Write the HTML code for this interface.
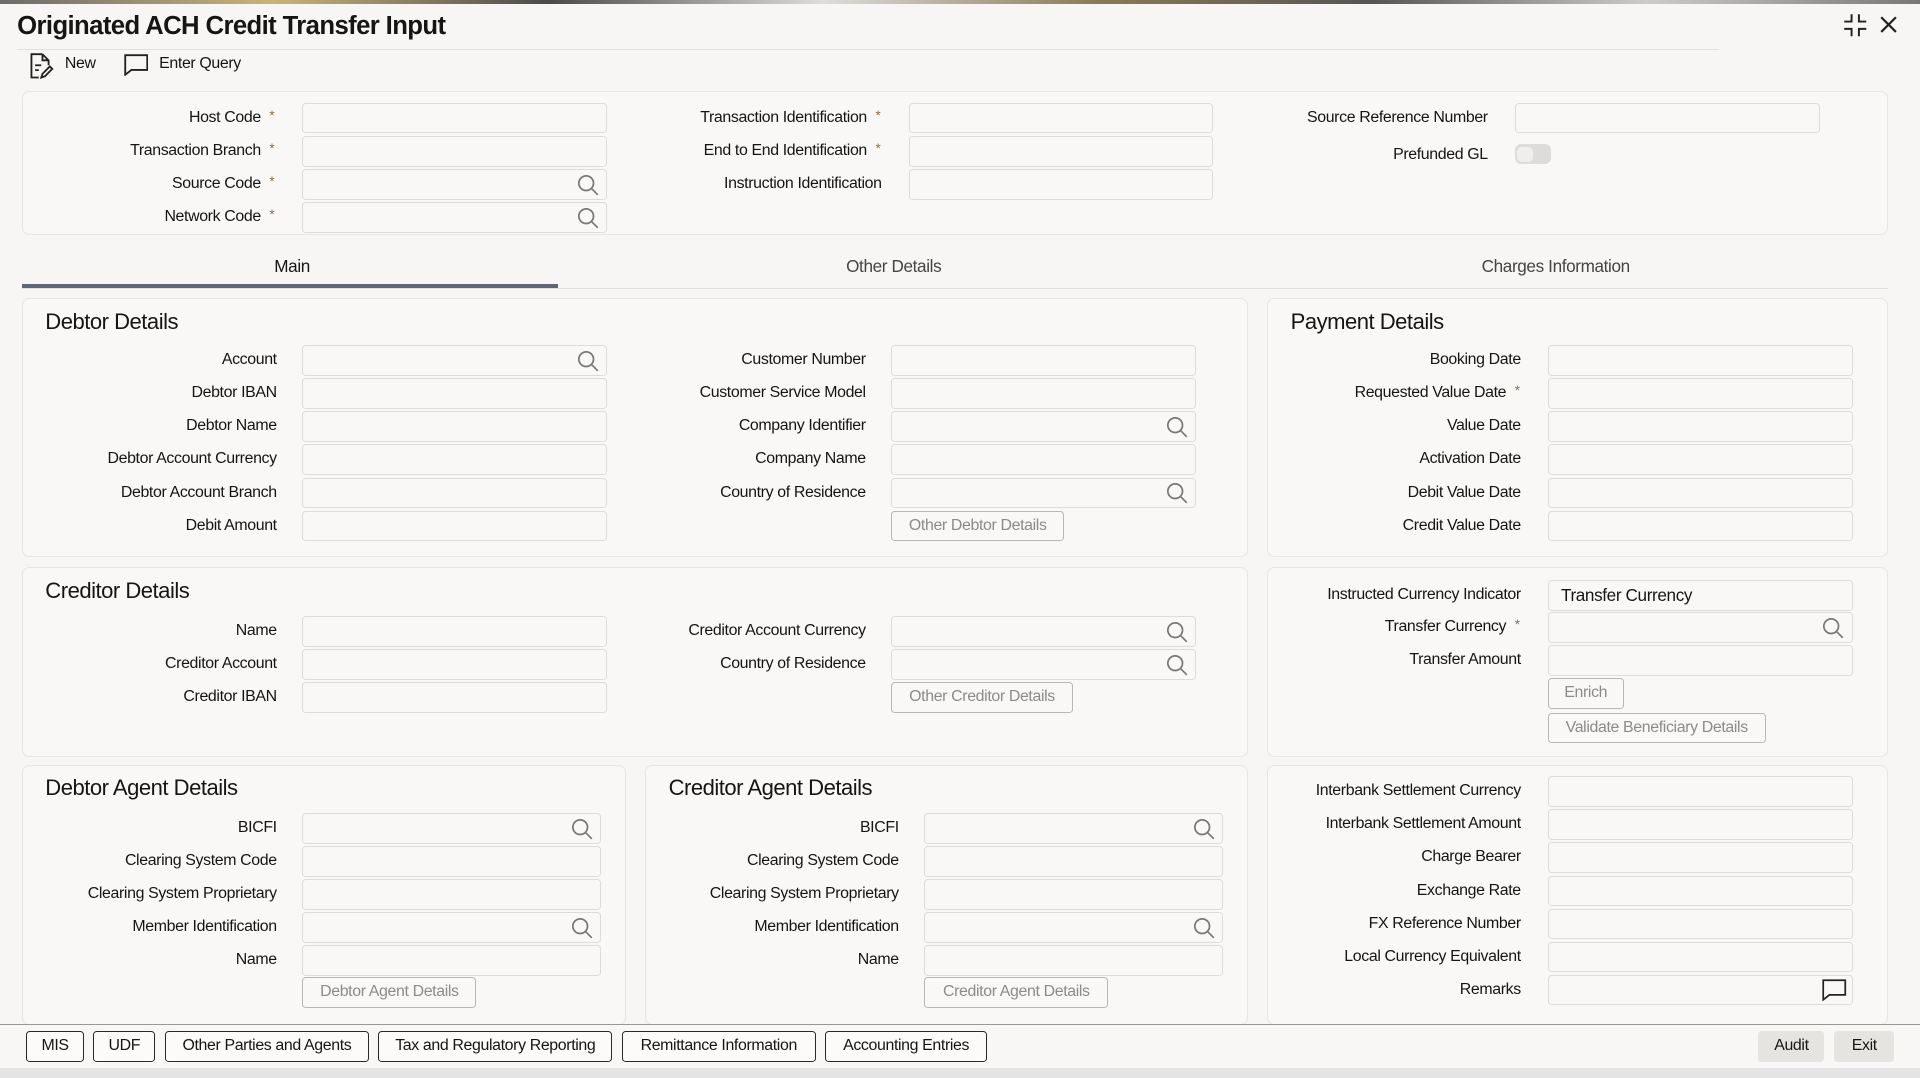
<!DOCTYPE html>
<html><head><meta charset="utf-8">
<style>
html,body{margin:0;padding:0;width:1920px;height:1078px;overflow:hidden;background:#fbfafa;}
#w{position:absolute;left:0;top:0;width:1568px;height:880px;zoom:1.22449;font-family:"Liberation Sans Narrow","Liberation Sans",sans-serif;color:#161513;font-size:13px;letter-spacing:-0.3px;background:#f7f6f5;}
.a{position:absolute}
.p{position:absolute;background:#f9f8f7;border:1px solid #e8e6e3;border-radius:6px;box-sizing:border-box}
.l{position:absolute;width:260px;text-align:right;line-height:25px;height:25px;white-space:nowrap}
.i{position:absolute;height:25px;background:#f9f8f7;border:1px solid #dedcda;border-radius:3px;box-sizing:border-box}
.s{position:absolute;right:6px;top:3px;width:18px;height:18px}
.st{color:#8a6e4b;font-size:11px;position:absolute;top:-5px}
.h{position:absolute;font-size:18px;line-height:22px;letter-spacing:-0.4px}
.b{position:absolute;border:1px solid #b9b7b4;border-radius:3px;height:25px;box-sizing:border-box;line-height:23px;text-align:center;color:#8d8b88;background:#f9f8f7}
.bb{position:absolute;top:842px;height:25px;border:1px solid #2a2927;border-radius:3px;box-sizing:border-box;line-height:23px;text-align:center;background:#fcfbfa}
</style></head><body><div id="w">
<div class="a" style="left:0;top:0;width:1568px;height:3px;background:linear-gradient(90deg,#6b6b6b,#c9b47a,#4a4a4a,#ddd,#8a7a55,#555,#ccc,#777)"></div>
<div class="a" style="left:14px;top:7px;font-size:21px;font-weight:bold;line-height:28px;letter-spacing:-0.5px">Originated ACH Credit Transfer Input</div>
<svg class="a" style="left:1505px;top:11px" width="20" height="20" viewBox="0 0 20 20" fill="none" stroke="#222" stroke-width="1.6"><path d="M7 1v6H1M13 1v6h6M7 19v-6H1M13 19v-6h6"/></svg>
<svg class="a" style="left:1535px;top:13px" width="14" height="14" viewBox="0 0 14 14" stroke="#222" stroke-width="1.8"><path d="M1 1l12 12M13 1L1 13"/></svg>
<div class="a" style="left:14px;top:40px;width:1390px;height:1px;background:#e2e0dd"></div>
<svg class="a" style="left:24px;top:43px" width="20" height="22" viewBox="0 0 20 22" fill="none" stroke="#222" stroke-width="1.5"><path d="M11 1H2v19h6M11 1l5 5v4M11 1v5h5M5 10h5M5 14h3M10 20l1-3 6-6 2 2-6 6z"/></svg>
<div class="a" style="left:53px;top:45px">New</div>
<svg class="a" style="left:101px;top:44px" width="20" height="18" viewBox="0 0 20 18" fill="none" stroke="#222" stroke-width="1.5"><path d="M1 1h18v12H6l-5 4z"/></svg>
<div class="a" style="left:130px;top:45px">Enter Query</div>

<div class="p" style="left:18px;top:74px;width:1524px;height:118px"></div>
<div class="l" style="left:-47px;top:84px">Host Code</div><span class="st" style="left:220px;top:88px">*</span><div class="i" style="left:247px;top:84px;width:249px"></div>
<div class="l" style="left:-47px;top:111px">Transaction Branch</div><span class="st" style="left:220px;top:115px">*</span><div class="i" style="left:247px;top:111px;width:249px"></div>
<div class="l" style="left:-47px;top:138px">Source Code</div><span class="st" style="left:220px;top:142px">*</span><div class="i" style="left:247px;top:138px;width:249px"><svg class="s" viewBox="0 0 18 18" fill="none" stroke="#777" stroke-width="1.4"><circle cx="7.5" cy="7.5" r="6"/><path d="M12 12l5 5"/></svg></div>
<div class="l" style="left:-47px;top:165px">Network Code</div><span class="st" style="left:220px;top:169px">*</span><div class="i" style="left:247px;top:165px;width:249px"><svg class="s" viewBox="0 0 18 18" fill="none" stroke="#777" stroke-width="1.4"><circle cx="7.5" cy="7.5" r="6"/><path d="M12 12l5 5"/></svg></div>
<div class="l" style="left:448px;top:84px">Transaction Identification</div><span class="st" style="left:715px;top:88px">*</span><div class="i" style="left:742px;top:84px;width:249px"></div>
<div class="l" style="left:448px;top:111px">End to End Identification</div><span class="st" style="left:715px;top:115px">*</span><div class="i" style="left:742px;top:111px;width:249px"></div>
<div class="l" style="left:460px;top:138px">Instruction Identification</div><div class="i" style="left:742px;top:138px;width:249px"></div>
<div class="l" style="left:955px;top:84px">Source Reference Number</div><div class="i" style="left:1237px;top:84px;width:249px"></div>
<div class="l" style="left:955px;top:114px">Prefunded GL</div>
<div class="a" style="left:1237px;top:118px;width:30px;height:16px;border-radius:5px;background:#dedcda"><div class="a" style="left:2px;top:2px;width:13px;height:12px;border-radius:4px;background:#efeeec"></div></div>

<div class="a" style="left:224px;top:209px;font-size:14px">Main</div>
<div class="a" style="left:691px;top:209px;font-size:14px;color:#444">Other Details</div>
<div class="a" style="left:1210px;top:209px;font-size:14px;color:#444">Charges Information</div>
<div class="a" style="left:18px;top:235px;width:1524px;height:1px;background:#e2e0dd"></div>
<div class="a" style="left:18px;top:232px;width:438px;height:3px;background:#5f6577"></div>

<div class="p" style="left:18px;top:243px;width:1001px;height:212px"></div>
<div class="h" style="left:37px;top:252px">Debtor Details</div>
<div class="l" style="left:-34px;top:282px">Account</div><div class="i" style="left:247px;top:282px;width:249px"><svg class="s" viewBox="0 0 18 18" fill="none" stroke="#777" stroke-width="1.4"><circle cx="7.5" cy="7.5" r="6"/><path d="M12 12l5 5"/></svg></div>
<div class="l" style="left:-34px;top:309px">Debtor IBAN</div><div class="i" style="left:247px;top:309px;width:249px"></div>
<div class="l" style="left:-34px;top:336px">Debtor Name</div><div class="i" style="left:247px;top:336px;width:249px"></div>
<div class="l" style="left:-34px;top:363px">Debtor Account Currency</div><div class="i" style="left:247px;top:363px;width:249px"></div>
<div class="l" style="left:-34px;top:390px">Debtor Account Branch</div><div class="i" style="left:247px;top:390px;width:249px"></div>
<div class="l" style="left:-34px;top:417px">Debit Amount</div><div class="i" style="left:247px;top:417px;width:249px"></div>
<div class="l" style="left:447px;top:282px">Customer Number</div><div class="i" style="left:728px;top:282px;width:249px"></div>
<div class="l" style="left:447px;top:309px">Customer Service Model</div><div class="i" style="left:728px;top:309px;width:249px"></div>
<div class="l" style="left:447px;top:336px">Company Identifier</div><div class="i" style="left:728px;top:336px;width:249px"><svg class="s" viewBox="0 0 18 18" fill="none" stroke="#777" stroke-width="1.4"><circle cx="7.5" cy="7.5" r="6"/><path d="M12 12l5 5"/></svg></div>
<div class="l" style="left:447px;top:363px">Company Name</div><div class="i" style="left:728px;top:363px;width:249px"></div>
<div class="l" style="left:447px;top:390px">Country of Residence</div><div class="i" style="left:728px;top:390px;width:249px"><svg class="s" viewBox="0 0 18 18" fill="none" stroke="#777" stroke-width="1.4"><circle cx="7.5" cy="7.5" r="6"/><path d="M12 12l5 5"/></svg></div>
<div class="b" style="left:728px;top:417px;width:141px">Other Debtor Details</div>

<div class="p" style="left:1035px;top:243px;width:507px;height:212px"></div>
<div class="h" style="left:1054px;top:252px">Payment Details</div>
<div class="l" style="left:982px;top:282px">Booking Date</div><div class="i" style="left:1264px;top:282px;width:249px"></div>
<div class="l" style="left:970px;top:309px">Requested Value Date</div><span class="st" style="left:1237px;top:313px">*</span><div class="i" style="left:1264px;top:309px;width:249px"></div>
<div class="l" style="left:982px;top:336px">Value Date</div><div class="i" style="left:1264px;top:336px;width:249px"></div>
<div class="l" style="left:982px;top:363px">Activation Date</div><div class="i" style="left:1264px;top:363px;width:249px"></div>
<div class="l" style="left:982px;top:390px">Debit Value Date</div><div class="i" style="left:1264px;top:390px;width:249px"></div>
<div class="l" style="left:982px;top:417px">Credit Value Date</div><div class="i" style="left:1264px;top:417px;width:249px"></div>

<div class="p" style="left:18px;top:463px;width:1001px;height:155px"></div>
<div class="h" style="left:37px;top:472px">Creditor Details</div>
<div class="l" style="left:-34px;top:503px">Name</div><div class="i" style="left:247px;top:503px;width:249px"></div>
<div class="l" style="left:-34px;top:530px">Creditor Account</div><div class="i" style="left:247px;top:530px;width:249px"></div>
<div class="l" style="left:-34px;top:557px">Creditor IBAN</div><div class="i" style="left:247px;top:557px;width:249px"></div>
<div class="l" style="left:447px;top:503px">Creditor Account Currency</div><div class="i" style="left:728px;top:503px;width:249px"><svg class="s" viewBox="0 0 18 18" fill="none" stroke="#777" stroke-width="1.4"><circle cx="7.5" cy="7.5" r="6"/><path d="M12 12l5 5"/></svg></div>
<div class="l" style="left:447px;top:530px">Country of Residence</div><div class="i" style="left:728px;top:530px;width:249px"><svg class="s" viewBox="0 0 18 18" fill="none" stroke="#777" stroke-width="1.4"><circle cx="7.5" cy="7.5" r="6"/><path d="M12 12l5 5"/></svg></div>
<div class="b" style="left:728px;top:557px;width:148px">Other Creditor Details</div>

<div class="p" style="left:1035px;top:463px;width:507px;height:155px"></div>
<div class="l" style="left:982px;top:474px">Instructed Currency Indicator</div><div class="i" style="left:1264px;top:474px;width:249px;padding-left:10px;font-size:14px;line-height:23px">Transfer Currency</div>
<div class="l" style="left:970px;top:500px">Transfer Currency</div><span class="st" style="left:1237px;top:504px">*</span><div class="i" style="left:1264px;top:500px;width:249px"><svg class="s" viewBox="0 0 18 18" fill="none" stroke="#777" stroke-width="1.4"><circle cx="7.5" cy="7.5" r="6"/><path d="M12 12l5 5"/></svg></div>
<div class="l" style="left:982px;top:527px">Transfer Amount</div><div class="i" style="left:1264px;top:527px;width:249px"></div>
<div class="b" style="left:1264px;top:554px;width:62px">Enrich</div>
<div class="b" style="left:1264px;top:582px;width:178px">Validate Beneficiary Details</div>

<div class="p" style="left:18px;top:625px;width:493px;height:212px"></div>
<div class="h" style="left:37px;top:633px">Debtor Agent Details</div>
<div class="l" style="left:-34px;top:664px">BICFI</div><div class="i" style="left:247px;top:664px;width:244px"><svg class="s" viewBox="0 0 18 18" fill="none" stroke="#777" stroke-width="1.4"><circle cx="7.5" cy="7.5" r="6"/><path d="M12 12l5 5"/></svg></div>
<div class="l" style="left:-34px;top:691px">Clearing System Code</div><div class="i" style="left:247px;top:691px;width:244px"></div>
<div class="l" style="left:-34px;top:718px">Clearing System Proprietary</div><div class="i" style="left:247px;top:718px;width:244px"></div>
<div class="l" style="left:-34px;top:745px">Member Identification</div><div class="i" style="left:247px;top:745px;width:244px"><svg class="s" viewBox="0 0 18 18" fill="none" stroke="#777" stroke-width="1.4"><circle cx="7.5" cy="7.5" r="6"/><path d="M12 12l5 5"/></svg></div>
<div class="l" style="left:-34px;top:772px">Name</div><div class="i" style="left:247px;top:772px;width:244px"></div>
<div class="b" style="left:247px;top:798px;width:142px">Debtor Agent Details</div>

<div class="p" style="left:527px;top:625px;width:492px;height:212px"></div>
<div class="h" style="left:546px;top:633px">Creditor Agent Details</div>
<div class="l" style="left:474px;top:664px">BICFI</div><div class="i" style="left:755px;top:664px;width:244px"><svg class="s" viewBox="0 0 18 18" fill="none" stroke="#777" stroke-width="1.4"><circle cx="7.5" cy="7.5" r="6"/><path d="M12 12l5 5"/></svg></div>
<div class="l" style="left:474px;top:691px">Clearing System Code</div><div class="i" style="left:755px;top:691px;width:244px"></div>
<div class="l" style="left:474px;top:718px">Clearing System Proprietary</div><div class="i" style="left:755px;top:718px;width:244px"></div>
<div class="l" style="left:474px;top:745px">Member Identification</div><div class="i" style="left:755px;top:745px;width:244px"><svg class="s" viewBox="0 0 18 18" fill="none" stroke="#777" stroke-width="1.4"><circle cx="7.5" cy="7.5" r="6"/><path d="M12 12l5 5"/></svg></div>
<div class="l" style="left:474px;top:772px">Name</div><div class="i" style="left:755px;top:772px;width:244px"></div>
<div class="b" style="left:755px;top:798px;width:150px">Creditor Agent Details</div>

<div class="p" style="left:1035px;top:625px;width:507px;height:212px"></div>
<div class="l" style="left:982px;top:634px">Interbank Settlement Currency</div><div class="i" style="left:1264px;top:634px;width:249px"></div>
<div class="l" style="left:982px;top:661px">Interbank Settlement Amount</div><div class="i" style="left:1264px;top:661px;width:249px"></div>
<div class="l" style="left:982px;top:688px">Charge Bearer</div><div class="i" style="left:1264px;top:688px;width:249px"></div>
<div class="l" style="left:982px;top:715px">Exchange Rate</div><div class="i" style="left:1264px;top:715px;width:249px"></div>
<div class="l" style="left:982px;top:742px">FX Reference Number</div><div class="i" style="left:1264px;top:742px;width:249px"></div>
<div class="l" style="left:982px;top:769px">Local Currency Equivalent</div><div class="i" style="left:1264px;top:769px;width:249px"></div>
<div class="l" style="left:982px;top:796px">Remarks</div><div class="i" style="left:1264px;top:796px;width:249px"><svg class="a" style="right:4px;top:3px" width="20" height="18" viewBox="0 0 20 18" fill="none" stroke="#222" stroke-width="1.4"><path d="M1 1h18v12H6l-5 4z"/></svg></div>

<div class="a" style="left:0;top:836px;width:1568px;height:1px;background:#9a9896"></div>
<div class="a" style="left:0;top:837px;width:1568px;height:35px;background:#f8f7f6"></div>
<div class="bb" style="left:21px;width:48px">MIS</div>
<div class="bb" style="left:76px;width:51px">UDF</div>
<div class="bb" style="left:135px;width:166px">Other Parties and Agents</div>
<div class="bb" style="left:309px;width:191px">Tax and Regulatory Reporting</div>
<div class="bb" style="left:508px;width:158px">Remittance Information</div>
<div class="bb" style="left:674px;width:132px">Accounting Entries</div>
<div class="a" style="left:1436px;top:842px;width:54px;height:25px;background:#e6e4e1;border-radius:3px;line-height:25px;text-align:center">Audit</div>
<div class="a" style="left:1498px;top:842px;width:49px;height:25px;background:#e6e4e1;border-radius:3px;line-height:25px;text-align:center">Exit</div>
<div class="a" style="left:0;top:872px;width:1568px;height:8px;background:#e4e4e4"></div>
</div></body></html>
